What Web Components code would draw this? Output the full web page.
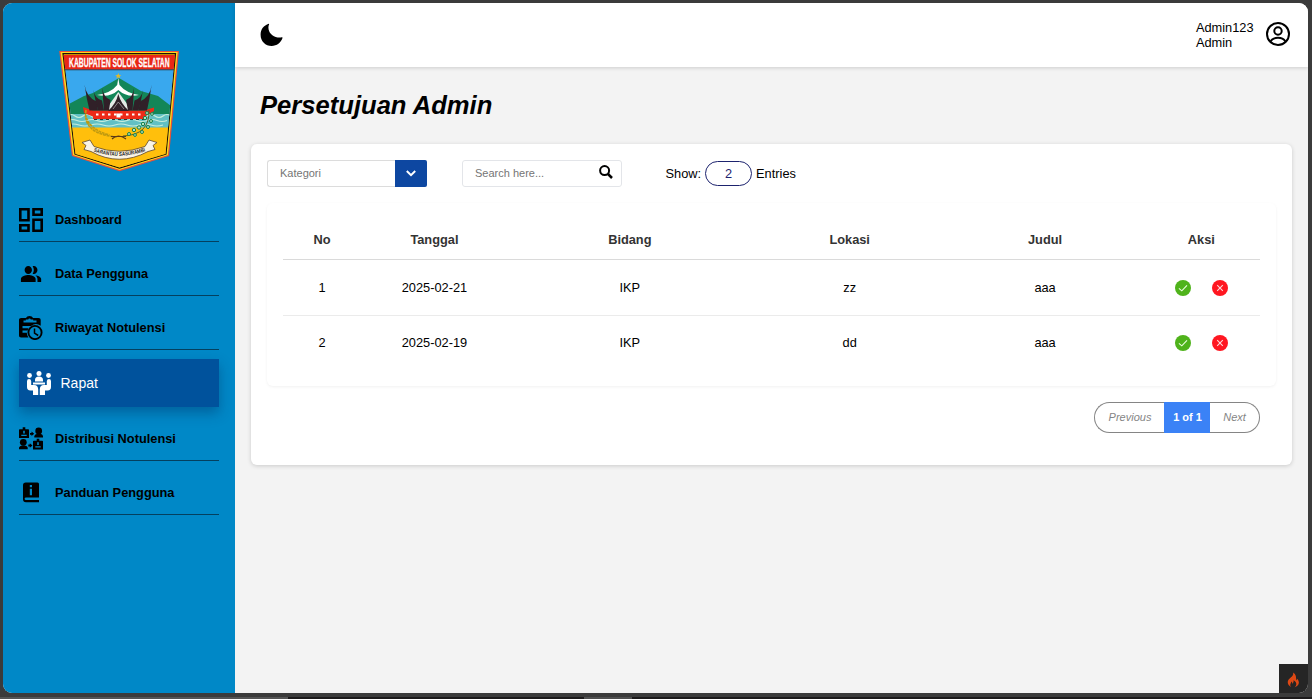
<!DOCTYPE html>
<html lang="id">
<head>
<meta charset="utf-8">
<title>Persetujuan Admin</title>
<style>
html,body{margin:0;height:100%;overflow:hidden}
body{font-family:"Liberation Sans",Arial,sans-serif;font-size:12.8px;color:#000;background:#3b3b3b}
</style>
</head>
<body>
<admin-shell>
  <side-bar slot="side">
    <nav-item icon="dashboard">Dashboard</nav-item>
    <nav-item icon="people">Data Pengguna</nav-item>
    <nav-item icon="history">Riwayat Notulensi</nav-item>
    <nav-item icon="meeting" active>Rapat</nav-item>
    <nav-item icon="share">Distribusi Notulensi</nav-item>
    <nav-item icon="book">Panduan Pengguna</nav-item>
  </side-bar>
  <top-bar slot="top"><span slot="name">Admin123</span><span slot="role">Admin</span></top-bar>
  <page-title>Persetujuan Admin</page-title>
  <content-card>
    <filter-bar></filter-bar>
    <meeting-table></meeting-table>
    <page-nav></page-nav>
  </content-card>
</admin-shell>
<script>
const define = (name, html, setup) => customElements.define(name, class extends HTMLElement {
  constructor() {
    super();
    const t = document.createElement('template');
    t.innerHTML = html;
    this.attachShadow({mode: 'open'}).append(t.content.cloneNode(true));
  }
  connectedCallback() { if (setup) setup(this, this.shadowRoot); }
});

const BADGE = '<path fill-rule="evenodd" d="M.8 2.200h2.900V.3h2.600v1.900H9.200q.8 0 .8.800V11H0V3q0-.8.8-.8zm3.400 1.500v2.800h1.600V3.700zM2.300 7.800v1.300h5.400V7.800z"/>';
const ICONS = {
  dashboard: '<path fill="none" stroke="currentColor" stroke-width="2.6" d="M1.300 1.300h8.200v11H1.300zM14.500 1.300h8.200v5.400h-8.200zM14.500 11.700h8.200v11h-8.200zM1.300 17.300h8.200v5.400H1.300z"/>',
  people: '<path transform="translate(1 0) scale(.92 1)" d="M16.67 13.13C18.04 14.06 19 15.32 19 17v3h4v-3c0-2.18-3.57-3.47-6.33-3.87zM15 12c2.210 0 4-1.790 4-4s-1.790-4-4-4c-.47 0-.91.1-1.330.24C14.500 5.270 15 6.580 15 8s-.5 2.730-1.330 3.760c.42.14.86.24 1.330.24zM9 12c2.210 0 4-1.790 4-4s-1.790-4-4-4-4 1.790-4 4 1.790 4 4 4zm0 1c-2.670 0-8 1.340-8 4v3h16v-3c0-2.660-5.330-4-8-4z"/>',
  history: '<path fill-rule="evenodd" d="M2.200 2H7C7.600.7 8.800 0 10.500 0S13.500.7 14 2h5.500c1.500 0 2.200.8 2.200 2.200V9.700A8 8 0 0 0 12 10H3.500v2.300h6L8.500 14.500h-5v2.300h4.300q0 2.700 1.600 4.700H2.200C.7 21.500 0 20.700 0 19.300V4.200C0 2.800.7 2 2.200 2zM4.500 4.600v2h13v-2h-3.300v-1h-2.500a1.200 1.200 0 1 0-2.400 0H6.800v1z"/><circle cx="16" cy="16.500" r="6.600" fill="none" stroke="currentColor" stroke-width="1.900"/><path fill="none" stroke="currentColor" stroke-width="1.500" d="M15.500 12.500v4.700l3.700 2.300"/>',
  meeting: '<circle cx="12" cy="2.600" r="2.500"/><circle cx="2.500" cy="4.500" r="2.400"/><circle cx="21.500" cy="4.500" r="2.400"/><path d="M8 10.500V9q0-3.500 4-3.500T16 9v1.500zM6 11.400h12v2.200H6zM0 10.300Q0 8 2 8t2.200 2.300V14H7c3 0 4.200 2 4.200 4.500V24H6v-4.500H3.500C1 19.500 0 18 0 16zm24 0Q24 8 22 8t-2.200 2.300V14H17c-3 0-4.200 2-4.200 4.500V24H18v-4.500h2.500c2.500 0 3.500-1.500 3.500-3.500z"/>',
  share: BADGE + '<g transform="translate(14 11.500)">' + BADGE + '</g><circle cx="19.700" cy="4" r="3.400"/><path d="M15.300 10.500V9q.5-1.800 3.200-2.200h2.700q2.500.4 2.800 2.200v1.500zM11 5.900h1.500V4.500l2.700 2.300-2.700 2.300V7.700H11z"/><circle cx="4.300" cy="15.300" r="3.400"/><path d="M0 22.300v-1.700q.5-1.800 3.200-2.200h2.500q2.700.4 3 2.200v1.700zM9.300 17.600h1.500v-1.400l2.700 2.300-2.700 2.300v-1.400H9.300z"/>',
  book: '<path fill-rule="evenodd" d="M6.800 1.500H18.500q1.500 0 1.500 1.500V16.500H7q-1.400 0-1.400 1.200T7 19h13v2.300H7q-3 0-3-3.200V4.300Q4 1.500 6.800 1.500zM10.800 4v2.200h2.200V4zm0 3.700v6.600h2.200V7.700z"/>'
};

define('ui-icon', `<style>:host{display:block;width:24px;height:24px;flex:none}svg{display:block;width:100%;height:100%;fill:currentColor}</style><svg viewBox="0 0 24 24"></svg>`, (el, root) => {
  root.querySelector('svg').innerHTML = ICONS[el.getAttribute('name')];
});

define('admin-shell', `<style>
:host{display:block;height:100vh;box-sizing:border-box;padding:3px 4px 0 3px;position:relative;background:#3b3b3b;overflow:hidden}
.win{display:grid;grid-template-columns:232px 1fr;height:690px;border-radius:9px;overflow:hidden;background:#f3f3f3;position:relative}
main{display:flex;flex-direction:column;min-width:0}
.fire{position:absolute;right:0;bottom:0;width:29px;height:29px;background:#252525;display:grid;place-items:center}
.fire svg{position:relative;left:0;top:1px}
.strip{position:absolute;left:0;right:0;bottom:0;height:2px;background:linear-gradient(90deg,#555 0 288px,#1c1a1b 288px 584px,#505050 584px 632px,#1c1a1b 632px)}
</style>
<div class="win"><slot name="side"></slot><main><slot name="top"></slot><slot></slot></main>
<div class="fire"><svg width="13" height="16" viewBox="0 0 14 17"><path fill="#dd4814" d="M6.500.3c.8 2.500-.6 3.800-2.500 5.600C2 7.800.7 9 .8 11.300c.1 2.300 1.700 4.200 4 4.900-1.200-1-1.600-2.200-1.100-3.500.3-.8.9-1.500 1.100-2.500.8.7 1 1.600.7 2.400 1.300-.6 1.900-2 1.500-3.700 1.900 1 3.300 2.600 3 4.400-.2 1.200-.8 2.100-1.800 2.900 2.600-.7 4.500-2.400 4.600-4.700.1-2-1.100-3.300-2.300-4.500.2 1-.1 1.700-.9 2C10.200 5.700 9.700 2 6.500.3z"/></svg></div></div>
<div class="strip"></div>`);

define('kab-crest', `<style>:host{display:block;width:120px;height:122px}svg{display:block;overflow:visible}text{font-family:"Liberation Sans",Arial,sans-serif;font-weight:bold}</style>
<svg width="120" height="122" viewBox="0 0 120 122">
<defs><clipPath id="s"><path d="M4.500 5H116L106.500 104 60.500 117.500 16.500 104z"/></clipPath>
<path id="ribbon" d="M34.500 101.500Q60 110.500 87 101"/></defs>
<path d="M.9 1.500H119.300L109.500 105.500 60.500 120.500 13.500 105.500z" fill="#ffd91c" stroke="#e8503a" stroke-width="1.200"/>
<path d="M4 3.700H116.500L107 104 60.500 118 16 104z" fill="#ffb800" stroke="#1a1208" stroke-width="1.200"/>
<g clip-path="url(#s)">
<path fill="#39a8ee" d="M0 18h120v60H0z"/>
<path fill="#138658" d="M8 55 25 46 34 43 60 28 82 41 99 46 112 56V66H8z"/>
<path fill="#ffbf0c" d="M8 77h104v44H8z"/>
<path fill="#62c0c4" d="M8 64h104v13.500H8z"/>
<path fill="none" stroke="#c9eedc" stroke-width="1.200" d="M8 66q4-3 8 0t8 0 8 0 8 0 8 0 8 0 8 0 8 0 8 0 8 0 8 0 8 0 8 0M8 70.500q5-2 10 0t10 0 10 0 10 0 10 0 10 0 10 0 10 0 10 0 10 0M8 75q6-2 12 0t12 0 12 0 12 0 12 0 12 0 12 0 12 0"/>
<path fill="#e92716" d="M0 3.500h120V19.500H0z"/>
</g>
<path fill="none" stroke="#222" stroke-width=".7" d="M5.500 19.800H115"/>
<text transform="translate(10 16.500) scale(.55 1)" x="0" y="0" font-size="13.500" fill="#fff" stroke="#fff" stroke-width=".3" textLength="183" lengthAdjust="spacingAndGlyphs">KABUPATEN SOLOK SELATAN</text>
<path fill="#fff" d="M59.300 28 60.500 35Q67 43 80 45 68 48 59.300 40 51 48 38 45 52 43 58.200 35z"/>
<path fill="#e0b92a" d="m59.300 23 .8 2 2.200.2-1.700 1.200.6 2.100-1.900-1.200-1.900 1.200.6-2.100-1.700-1.200 2.200-.2z"/>
<path fill="#e4ebe6" d="M50 55 59.300 42 69 55 71 60H48z"/>
<path fill="#ed2b18" d="M24 57 34 60.500H85L95 57.500V61L86 66.500V69H34V66.500L25 63z"/>
<g fill="#302028"><path d="M25.500 34.500Q27 46.500 37.500 51.500L39 60.500H30.500Q27.500 49 25.500 34.500z"/><path d="M34.300 40Q36 48.500 43 50.500L45 60.500H39Q36 49 34.300 40z"/><path d="M43.300 38Q44.500 47.500 51.500 50L50 60.500H45Q44 49 43.300 38z"/>
<path d="M92.700 34.500Q91.500 46.500 81 51.500L79.500 60.500H88Q90.700 49 92.700 34.500z"/><path d="M84 40Q82.500 48.500 75.500 50.500L73.500 60.500H79.500Q82.500 49 84 40z"/><path d="M75 38Q74 47.500 67 50L69 60.500H73.500Q74.500 49 75 38z"/>
<path d="M49 61Q57 54 59.300 44 62 54 70 61z"/></g>
<path stroke="#c9c3c6" stroke-width=".6" d="m54 59 5.300-7L65 59" fill="none"/>
<path stroke="#fff" stroke-width="2.200" stroke-dasharray="2.500 3.500" d="M37 64.500H84"/><path fill="#fff" d="M57.500 63.500h4v4h-4z"/>
<path stroke="#333" stroke-width="1" stroke-dasharray="3 3" d="M35 69.500H85"/>
<path d="M27 60Q23 84 58 87M26.500 64q2 15 24 21" fill="none" stroke="#c09a10" stroke-width="1.600" stroke-dasharray="3 .7"/>
<path d="M53 89q6-6 14 0M52 86.500h15" fill="none" stroke="#5b3a16" stroke-width="1.100"/>
<path d="M64 86Q91 85 90 60" fill="none" stroke="#5b6425" stroke-width="1"/>
<g fill="#b9e0c2" stroke="#16814a" stroke-width="1"><circle cx="70" cy="84" r="1.500"/><circle cx="75" cy="80" r="1.700"/><circle cx="76" cy="85" r="1.400"/><circle cx="80" cy="77.500" r="1.700"/><circle cx="83" cy="82" r="1.500"/><circle cx="84" cy="74" r="1.700"/><circle cx="89" cy="77" r="1.500"/><circle cx="86" cy="68" r="1.700"/><circle cx="92" cy="71" r="1.500"/><circle cx="88" cy="63" r="1.500"/><circle cx="93" cy="64" r="1.400"/></g>
<path d="M23 92.500 31 90 35 96.500Q60 106 86 96.500L90 90 98 92.500 94 95.500 96 99.500 89 101.500Q60 117 32 101.500L25 99.500 27 95.500z" fill="#faf4e6" stroke="#5c4630" stroke-width=".8"/>
<text font-size="5.500" fill="#222"><textPath href="#ribbon" textLength="53" lengthAdjust="spacingAndGlyphs">SARANTAU SASURAMBI</textPath></text>
</svg>`);

define('side-bar', `<style>
:host{display:block;background:#0088c7;padding:47px 16px 0}
kab-crest{margin:0 auto 25px}
nav{display:flex;flex-direction:column;gap:9px}
</style><kab-crest></kab-crest><nav><slot></slot></nav>`);

define('nav-item', `<style>
:host{display:flex;align-items:center;gap:12px;box-sizing:border-box;height:45px;padding-top:2px;border-bottom:1px solid #04405f;font-weight:bold}
:host([active]){height:48px;padding:0 8px;gap:9.500px;border:0;background:#00529c;color:#fff;font-weight:normal;font-size:14px;box-shadow:0 6px 12px rgba(0,40,90,.38)}
.l{margin-top:-1px}
</style><span class="l"><slot></slot></span>`, (el, root) => {
  const i = document.createElement('ui-icon');
  i.setAttribute('name', el.getAttribute('icon'));
  root.querySelector('.l').before(i);
});

define('top-bar', `<style>
:host{display:flex;align-items:center;box-sizing:border-box;height:64px;padding:0 18px 0 24.500px;background:#fff;box-shadow:0 1px 4px rgba(0,0,0,.16);position:relative}
.moon{flex:none}
.who{margin-left:auto;margin-right:12.500px;line-height:15px;display:flex;flex-direction:column}
</style>
<svg class="moon" width="24" height="24" viewBox="0 0 24 24"><path d="M8.800.7C3.700 2.300.6 6.300.6 11.800.6 18.500 5.400 23 11.700 23c5 0 9.400-3.300 10.900-8.200-.1-.5-.3-.7-.8-.6-1.300.4-2.700.4-4.200.2C12.400 13.600 8.400 9.600 8.400 4.200c0-1 .3-2 .7-3 .1-.3 0-.5-.3-.5z"/></svg>
<div class="who"><slot name="name"></slot><slot name="role"></slot></div>
<svg width="24" height="24" viewBox="0 0 24 24" fill="none" stroke="#000" stroke-width="2" style="margin-top:-2px"><circle cx="12" cy="12" r="11"/><circle cx="12" cy="9" r="3.700"/><path d="M4.500 19.500Q7 15.800 12 15.800T19.500 19.500"/></svg>`);

define('page-title', `<style>:host{display:block;margin:23px 0 0 25px;font:italic bold 25.6px/30px "Liberation Sans",Arial,sans-serif}</style><slot></slot>`);

define('content-card', `<style>:host{display:block;box-sizing:border-box;margin:24px 16px 0;height:321px;padding:16px 16px 0;background:#fff;border-radius:6px;box-shadow:0 1px 4px rgba(0,0,0,.17)}</style><slot></slot>`);

define('filter-bar', `<style>
:host{display:flex;align-items:center;height:27px}
.f{box-sizing:border-box;width:160px;height:27px;display:flex;align-items:center;border:1px solid #dcdcdc;border-radius:3px;padding-left:12px;font-size:11px;color:#757575}
.t{margin-top:-2px}
.sel{margin-right:35px;border-right:0}.btn{width:32px;height:27px;margin-left:auto;background:#0d47a1;display:grid;place-items:center;border-radius:0 2px 2px 0}
.search{margin-right:43.500px;padding-right:8.500px;border-color:#e3e5e9}.search svg{margin-left:auto;margin-top:-3px}
.n{box-sizing:border-box;width:47px;height:25px;border:1px solid #1d236e;border-radius:13px;margin:0 4px 0 4px;display:grid;place-items:center;color:#1d236e}
</style>
<div class="f sel"><span class="t">Kategori</span><span class="btn"><svg width="10" height="8" viewBox="0 0 10 8" fill="none" stroke="#fff" stroke-width="2"><path d="m.8 1 4.200 4.200 4.200-4.200"/></svg></span></div>
<div class="f search"><span class="t">Search here...</span><svg width="14" height="14" viewBox="0 0 14 14" fill="none" stroke="#000"><circle cx="5.600" cy="5.600" r="4.500" stroke-width="2"/><path stroke-width="2.500" d="m9 9 4 4"/></svg></div>
<span>Show:</span><span class="n">2</span><span>Entries</span>`);

define('meeting-table', `<style>
:host{display:block;box-sizing:border-box;height:183px;margin-top:16px;padding:16px;border-radius:6px;box-shadow:0 1px 3px rgba(0,0,0,.06)}
.r{display:grid;grid-template-columns:8fr 15fr 25fr 20fr 20fr 12fr;align-items:center;text-align:center;box-sizing:border-box;height:53px}
.h{height:41px;font-weight:bold;color:#333;border-bottom:1px solid #dadada}
.r.a{height:56px;border-bottom:1px solid #ebebeb}
.act{display:flex;gap:21px;justify-content:center;padding-top:1px}
svg{display:block}
</style><div class="r h"><span>No</span><span>Tanggal</span><span>Bidang</span><span>Lokasi</span><span>Judul</span><span>Aksi</span></div>`, (el, root) => {
  const act = `<span class="act"><svg width="16" height="16" viewBox="0 0 16 16"><circle cx="8" cy="8" r="8" fill="#4fb31b"/><path d="m3.900 8.300 2.900 2.500L12 5.300" fill="none" stroke="#eaffdf" stroke-width="1.100"/></svg><svg width="16" height="16" viewBox="0 0 16 16"><circle cx="8" cy="8" r="8" fill="#ff1721"/><path d="m5.200 5.200 5.600 5.600m0-5.600-5.600 5.600" stroke="#ffd9da" stroke-width="1.100"/></svg></span>`;
  [['1','2025-02-21','IKP','zz','aaa'],['2','2025-02-19','IKP','dd','aaa']].forEach((d, i) => {
    const r = document.createElement('div');
    r.className = i ? 'r' : 'r a';
    r.innerHTML = d.map(x => `<span>${x}</span>`).join('') + act;
    root.append(r);
  });
});

define('page-nav', `<style>
:host{display:flex;justify-content:flex-end;margin:16px 16px 0;height:31px;font-size:11px}
span{box-sizing:border-box;display:grid;place-items:center;border:1px solid #858585;color:#858585;font-style:italic;height:31px;padding-bottom:2px}
.p{width:70px;border-right:0;border-radius:16px 0 0 16px;padding-left:1px}
.c{width:46px;background:#3b82f6;border:0;color:#fff;font-weight:bold;font-style:normal;padding-left:1px}
.x{width:50px;border-left:0;border-radius:0 16px 16px 0}
</style><span class="p">Previous</span><span class="c">1 of 1</span><span class="x">Next</span>`);
</script>
</body>
</html>
